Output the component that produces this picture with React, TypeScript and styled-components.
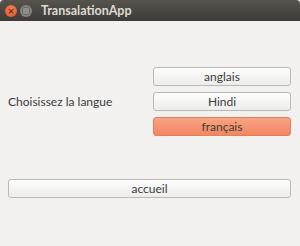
import React from 'react';
import styled, { createGlobalStyle } from 'styled-components';

const GlobalStyle = createGlobalStyle`
  html, body {
    margin: 0;
    padding: 0;
    background: #f2f1f0;
  }
  body {
    font-family: 'Lato', 'DejaVu Sans', sans-serif;
  }
`;

const languages = ['anglais', 'Hindi', 'français'];

export default function App() {
  return (
    <Window>
      <GlobalStyle />
      <TitleBar>
        <WinButtons>
          <CloseDot>×</CloseDot>
          <GrayDot>
            <GrayCore />
          </GrayDot>
        </WinButtons>
        <Title>TransalationApp</Title>
      </TitleBar>
      <Body>
        <LangRow>
          <Label>Choisissez la langue</Label>
          <ButtonCol>
            {languages.map((lang) => (
              <Button key={lang} $active={lang === 'français'}>
                {lang}
              </Button>
            ))}
          </ButtonCol>
        </LangRow>
        <HomeButton>accueil</HomeButton>
      </Body>
    </Window>
  );
}

const Window = styled.div`
  width: 300px;
  height: 246px;
  background: #f2f1f0;
  overflow: hidden;
`;

const TitleBar = styled.div`
  height: 21px;
  display: flex;
  align-items: center;
  padding-left: 5px;
  background: linear-gradient(#56544d, #3c3b37);
  border-top-left-radius: 4px;
  border-top-right-radius: 4px;
`;

const WinButtons = styled.div`
  display: flex;
  gap: 3px;
  margin-right: 9px;
`;

const CloseDot = styled.div`
  width: 12px;
  height: 12px;
  border-radius: 50%;
  background: radial-gradient(circle at 50% 40%, #f48a5e, #df4a1c);
  color: #6a2a12;
  font: bold 9px/12px 'DejaVu Sans', sans-serif;
  text-align: center;
`;

const GrayDot = styled.div`
  width: 12px;
  height: 12px;
  border-radius: 50%;
  display: flex;
  align-items: center;
  justify-content: center;
  background: #86857f;
`;

const GrayCore = styled.div`
  width: 6px;
  height: 6px;
  border-radius: 2px;
  border: 1px solid #6c6b65;
  background: #8e8d87;
`;

const Title = styled.div`
  color: #dfdbd2;
  font: bold 12.5px 'Lato', sans-serif;
`;

const Body = styled.div`
  padding: 46px 9px 0 8px;
`;

const LangRow = styled.div`
  display: flex;
  align-items: center;
  justify-content: space-between;
`;

const Label = styled.div`
  color: #3c3c3c;
  font-size: 12px;
`;

const ButtonCol = styled.div`
  display: flex;
  flex-direction: column;
  gap: 6px;
  width: 138px;
`;

const Button = styled.button<{ $active?: boolean }>`
  height: 19px;
  padding: 0;
  box-sizing: border-box;
  border-radius: 3px;
  border: 1px solid ${(p) => (p.$active ? '#e0805c' : '#b9b8b3')};
  background: ${(p) =>
    p.$active
      ? 'linear-gradient(#f8a486, #f2865f)'
      : 'linear-gradient(#fdfdfc, #ececea)'};
  color: #3c3c3c;
  font-family: 'Lato', sans-serif;
  font-size: 12px;
  text-align: center;
`;

const HomeButton = styled(Button)`
  display: block;
  width: 283px;
  margin-top: 43px;
`;
